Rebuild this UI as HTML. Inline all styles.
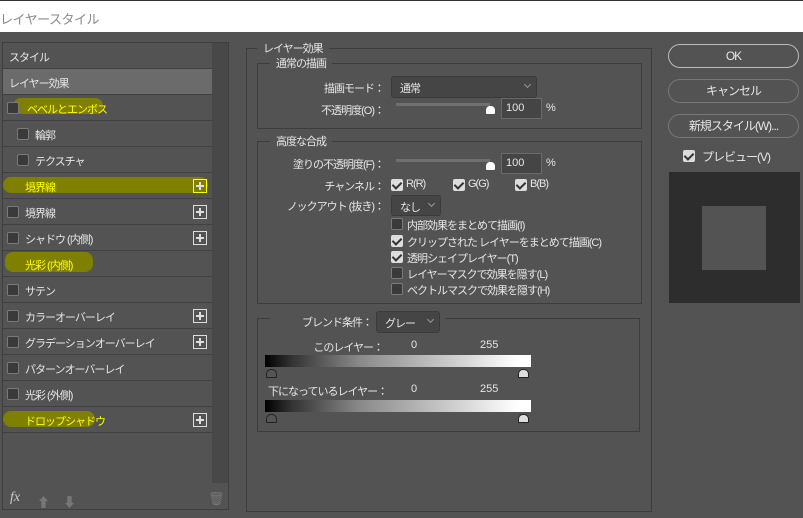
<!DOCTYPE html><html><head><meta charset="utf-8"><style>
*{box-sizing:border-box;margin:0;padding:0}
body{width:803px;height:518px;background:#535353;font-family:"Liberation Sans","Noto Sans CJK JP",sans-serif;font-size:11px;letter-spacing:-1px;color:#e6e6e6;position:relative;overflow:hidden}
.a{position:absolute;white-space:nowrap}
.title{left:0;top:0;width:803px;height:32px;background:#fff;border-top:1px solid #333}
.title span{position:absolute;left:0;top:8px;font-size:13px;color:#8a8a8a;letter-spacing:-0.5px}
.left{left:2px;top:42px;width:227px;height:468px;border:1px solid #3f3f3f}
.row{position:absolute;left:3px;width:209px;height:26px;border-bottom:1px solid #404040}
.row span{position:absolute;top:6px}
.cb{position:absolute;width:12px;height:12px;border:1px solid #7a7a7a;border-radius:2px;background:#3a3a3a}
.ck{position:absolute;width:12px;height:12px;border-radius:2px;background:#ddd}
.ck:after{content:"";position:absolute;left:3px;top:1px;width:4px;height:7px;border:solid #333;border-width:0 2px 2px 0;transform:rotate(45deg)}
.plus{position:absolute;right:5px;top:6px;width:14px;height:14px;border:1px solid #ddd}
.plus:before{content:"";position:absolute;left:2px;top:5px;width:8px;height:2px;background:#ddd}
.plus:after{content:"";position:absolute;left:5px;top:2px;width:2px;height:8px;background:#ddd}
.hl{position:absolute;background:#7f7f00;border-radius:8px}
.y{color:#ffff00}
.fs{position:absolute;border:1px solid #3c3c3c}
.lg{position:absolute;background:#535353;padding:0 6px}
.dd{position:absolute;background:#454545;border:1px solid #3a3a3a;border-radius:3px}
.dd span{position:absolute;left:8px;top:3px}
.dd i{position:absolute;right:6px;top:5px;width:5px;height:5px;border:solid #999;border-width:0 1px 1px 0;transform:rotate(45deg)}
.inp{position:absolute;width:41px;height:21px;background:#454545;border:1px solid #6a6a6a;padding:3px 4px;letter-spacing:0}
.trk{position:absolute;height:3px;background:#6f6f6f;width:94px}
.th{position:absolute;width:9px;height:8px;background:#fff;border-radius:4px 4px 1px 1px}
.r{text-align:right}
.btn{position:absolute;left:668px;width:131px;height:24px;border:1px solid #777;border-radius:12px;text-align:center;line-height:22px;font-size:12px}
.grad{position:absolute;left:265px;width:266px;height:12px;background:linear-gradient(to right,#000,#333 10%,#888 35%,#ccc 70%,#fff 95%)}
.gth{position:absolute;width:11px;height:9px;border:1px solid #222;border-radius:5px 5px 1px 1px}
</style></head><body>
<div class="a title"><span>レイヤースタイル</span></div>
<div class="a left"></div>
<div class="a" style="left:212px;top:43px;width:16px;height:440px;background:#484848"></div>
<div class="row" style="top:43px"><span style="left:6px">スタイル</span></div>
<div class="row" style="top:69px;background:#6b6b6b"><span style="left:6px">レイヤー効果</span></div>
<div class="row" style="top:95px"><div class="hl" style="left:10px;top:3px;width:90px;height:16px"></div><div class="cb" style="left:4px;top:7px"></div><span class="y" style="left:24px">ベベルとエンボス</span></div>
<div class="row" style="top:121px"><div class="cb" style="left:14px;top:7px"></div><span style="left:32px">輪郭</span></div>
<div class="row" style="top:147px"><div class="cb" style="left:14px;top:7px"></div><span style="left:32px">テクスチャ</span></div>
<div class="row" style="top:173px"><div class="hl" style="left:0;top:4px;width:205px;height:16px"></div><span class="y" style="left:22px">境界線</span><div class="plus" style="border-color:#ff0"></div></div>
<div class="row" style="top:199px"><div class="cb" style="left:4px;top:7px"></div><span style="left:22px">境界線</span><div class="plus"></div></div>
<div class="row" style="top:225px"><div class="cb" style="left:4px;top:7px"></div><span style="left:22px">シャドウ (内側)</span><div class="plus"></div></div>
<div class="row" style="top:251px"><div class="hl" style="left:2px;top:1px;width:88px;height:20px"></div><span class="y" style="left:22px">光彩 (内側)</span></div>
<div class="row" style="top:277px"><div class="cb" style="left:4px;top:7px"></div><span style="left:22px">サテン</span></div>
<div class="row" style="top:303px"><div class="cb" style="left:4px;top:7px"></div><span style="left:22px">カラーオーバーレイ</span><div class="plus"></div></div>
<div class="row" style="top:329px"><div class="cb" style="left:4px;top:7px"></div><span style="left:22px">グラデーションオーバーレイ</span><div class="plus"></div></div>
<div class="row" style="top:355px"><div class="cb" style="left:4px;top:7px"></div><span style="left:22px">パターンオーバーレイ</span></div>
<div class="row" style="top:381px"><div class="cb" style="left:4px;top:7px"></div><span style="left:22px">光彩 (外側)</span></div>
<div class="row" style="top:407px"><div class="hl" style="left:0;top:4px;width:92px;height:16px"></div><span class="y" style="left:22px">ドロップシャドウ</span><div class="plus"></div></div>
<div class="a" style="left:10px;top:490px;font-style:italic;font-size:14px;color:#ccc;font-family:'Liberation Serif',serif;letter-spacing:0">fx</div>
<div class="a" style="left:37px;top:492px;color:#777;font-size:13px">⬆</div>
<div class="a" style="left:63px;top:492px;color:#777;font-size:13px">⬇</div>
<div class="a" style="left:208px;top:491px;color:#777;font-size:13px">🗑</div>

<div class="fs" style="left:246px;top:48px;width:406px;height:464px"></div>
<div class="lg" style="left:257px;top:40px">レイヤー効果</div>
<div class="fs" style="left:257px;top:63px;width:385px;height:66px"></div>
<div class="lg" style="left:270px;top:55px">通常の描画</div>
<div class="a r" style="right:419px;top:80px">描画モード：</div>
<div class="dd" style="left:391px;top:76px;width:146px;height:22px"><span>通常</span><i></i></div>
<div class="a r" style="right:419px;top:102px">不透明度(O)：</div>
<div class="trk" style="left:396px;top:103px"></div><div class="th" style="left:486px;top:106px"></div>
<div class="inp" style="left:501px;top:98px">100</div><div class="a" style="left:546px;top:102px">%</div>

<div class="fs" style="left:257px;top:141px;width:385px;height:163px"></div>
<div class="lg" style="left:270px;top:133px">高度な合成</div>
<div class="a r" style="right:419px;top:156px">塗りの不透明度(F)：</div>
<div class="trk" style="left:396px;top:159px"></div><div class="th" style="left:486px;top:162px"></div>
<div class="inp" style="left:501px;top:153px">100</div><div class="a" style="left:546px;top:157px">%</div>
<div class="a r" style="right:419px;top:178px">チャンネル：</div>
<div class="ck" style="left:391px;top:179px"></div><div class="a" style="left:406px;top:178px">R(R)</div>
<div class="ck" style="left:453px;top:179px"></div><div class="a" style="left:468px;top:178px">G(G)</div>
<div class="ck" style="left:515px;top:179px"></div><div class="a" style="left:530px;top:178px">B(B)</div>
<div class="a r" style="right:419px;top:198px">ノックアウト (抜き)：</div>
<div class="dd" style="left:391px;top:195px;width:50px;height:21px"><span>なし</span><i></i></div>
<div class="cb" style="left:391px;top:218px"></div><div class="a" style="left:407px;top:217px">内部効果をまとめて描画(I)</div>
<div class="ck" style="left:391px;top:235px"></div><div class="a" style="left:407px;top:234px">クリップされた レイヤーをまとめて描画(C)</div>
<div class="ck" style="left:391px;top:251px"></div><div class="a" style="left:407px;top:250px">透明シェイプレイヤー(T)</div>
<div class="cb" style="left:391px;top:267px"></div><div class="a" style="left:407px;top:266px">レイヤーマスクで効果を隠す(L)</div>
<div class="cb" style="left:391px;top:283px"></div><div class="a" style="left:407px;top:282px">ベクトルマスクで効果を隠す(H)</div>

<div class="fs" style="left:257px;top:318px;width:383px;height:114px"></div>
<div class="lg" style="left:270px;top:312px;width:175px;height:20px"></div>
<div class="a" style="left:302px;top:314px">ブレンド条件：</div>
<div class="dd" style="left:376px;top:311px;width:64px;height:22px"><span>グレー</span><i></i></div>
<div class="a r" style="right:420px;top:339px">このレイヤー：</div>
<div class="a" style="left:411px;top:339px">0</div><div class="a" style="left:480px;top:339px;letter-spacing:0">255</div>
<div class="grad" style="top:355px"></div>
<div class="gth" style="left:266px;top:369px;background:#555"></div><div class="gth" style="left:518px;top:369px;background:#ddd"></div>
<div class="a" style="left:268px;top:383px">下になっているレイヤー：</div>
<div class="a" style="left:411px;top:383px">0</div><div class="a" style="left:480px;top:383px;letter-spacing:0">255</div>
<div class="grad" style="top:400px"></div>
<div class="gth" style="left:266px;top:414px;background:#555"></div><div class="gth" style="left:518px;top:414px;background:#ddd"></div>

<div class="btn" style="top:44px;border-color:#bbb">OK</div>
<div class="btn" style="top:79px">キャンセル</div>
<div class="btn" style="top:114px">新規スタイル(W)...</div>
<div class="ck" style="left:683px;top:150px"></div><div class="a" style="left:702px;top:148px;font-size:12px">プレビュー(V)</div>
<div class="a" style="left:669px;top:172px;width:131px;height:131px;background:#2d2d2d"></div>
<div class="a" style="left:702px;top:206px;width:64px;height:64px;background:#535353"></div>
</body></html>
